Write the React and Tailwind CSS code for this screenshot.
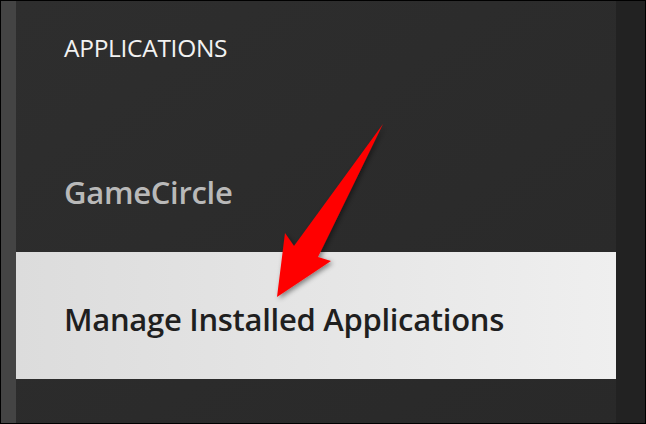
import React from 'react';

const Arrow = () => (
  <svg className="absolute left-0 top-0 pointer-events-none" width="646" height="424" viewBox="0 0 646 424">
    <defs>
      <filter id="arrowShadow" x="-20%" y="-20%" width="140%" height="140%">
        <feDropShadow dx="2" dy="2" stdDeviation="2.5" floodColor="#000" floodOpacity="0.45" />
      </filter>
    </defs>
    <polygon
      points="383,124 318,257 331,261 277,297 285,233 294,246"
      fill="#ff0000"
      filter="url(#arrowShadow)"
    />
  </svg>
);

export default function App() {
  return (
    <div className="relative w-[646px] h-[424px] bg-black p-px" style={{ fontFamily: '"Open Sans", "Noto Sans", sans-serif' }}>
      <div className="flex h-full">
        <div className="w-[15px] bg-[#444444]" />
        <div className="flex-1 flex flex-col bg-gradient-to-br from-[#2e2e2e] to-[#292929]">
          <div className="h-[125px] pl-12 pt-[29px]">
            <span className="text-[24.5px] text-[#f2f2f2] tracking-[-0.3px]">APPLICATIONS</span>
          </div>
          <div className="h-[126px] pl-12 flex items-center pt-[6px]">
            <span className="text-[31px] font-semibold text-[#b9b9b9] tracking-[-0.3px]">GameCircle</span>
          </div>
          <div className="h-[127px] pl-12 flex items-center pt-[8px] bg-gradient-to-r from-[#dcdcdc] to-[#efefef]">
            <span className="text-[31px] font-semibold text-[#1f1f1f] tracking-[-0.3px]">Manage Installed Applications</span>
          </div>
          <div className="flex-1" />
        </div>
        <div className="w-[29px] bg-[#222222]" />
      </div>
      <Arrow />
    </div>
  );
}
